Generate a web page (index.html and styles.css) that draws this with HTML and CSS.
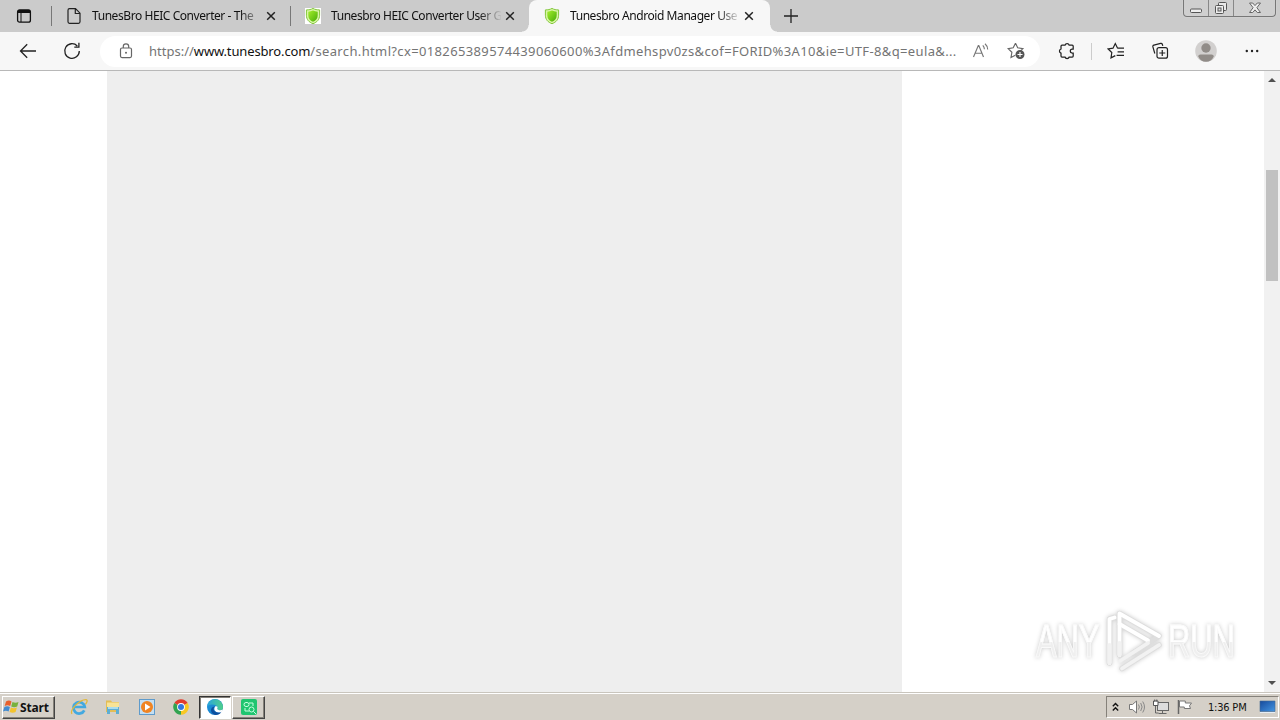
FILE: index.html
```html
<!DOCTYPE html>
<html lang="en">
<head>
<meta charset="utf-8">
<title>Tunesbro Android Manager User Guide</title>
<link rel="stylesheet" href="styles.css">
</head>
<body>
<svg class="defs" width="0" height="0">
  <defs>
    <linearGradient id="green" x1="0" y1="0" x2="1" y2="1"><stop offset="0" stop-color="#a4ee2c"/><stop offset="1" stop-color="#48ac08"/></linearGradient>
    <linearGradient id="edge" x1="0" y1="0" x2="1" y2="1"><stop offset="0" stop-color="#1e9be0"/><stop offset=".5" stop-color="#1a86d0"/><stop offset="1" stop-color="#0c4ea8"/></linearGradient>
    <linearGradient id="edgeTop" x1="0" y1="0" x2="1" y2="0"><stop offset="0" stop-color="#2aa5dc"/><stop offset="1" stop-color="#4fd08a"/></linearGradient>
    <linearGradient id="screen" x1="0" y1="0" x2="1" y2="1"><stop offset="0" stop-color="#164a9c"/><stop offset="1" stop-color="#4596e2"/></linearGradient>
    <symbol id="shield" viewBox="0 0 16 16">
      <path d="M8 .4C6.200 1.500 3.800 1.900 1.400 1.900v5.300C1.400 11.500 4 14.300 8 15.700c4-1.400 6.600-4.200 6.600-8.500V1.900C12.200 1.900 9.800 1.500 8 .4z" fill="#d9f5a6" stroke="#82c83a" stroke-width="1"/>
      <path d="M8 2.600C6.600 3.300 5 3.700 3.300 3.800v3.400c0 3.200 1.800 5.300 4.700 6.500 2.900-1.200 4.700-3.300 4.700-6.500V3.800C11 3.700 9.400 3.300 8 2.600z" fill="url(#green)"/>
    </symbol>
    <symbol id="close" viewBox="0 0 10 10"><path d="M1.200 1.200l7.600 7.600M8.800 1.200L1.200 8.800" stroke="#222" stroke-width="1.500" fill="none"/></symbol>
  </defs>
</svg>
<div class="screen">
  <header class="tabstrip">
    <div class="tab-actions">
      <svg width="16" height="16" viewBox="0 0 16 16"><rect x="1.600" y="1.800" width="12.800" height="12.400" rx="2" fill="none" stroke="#111" stroke-width="1.300"/><path d="M2 2h12v3H2z" fill="#111"/><path d="M5 5v9" stroke="#111"/></svg>
    </div>
    <div class="tab">
      <svg class="favicon" width="16" height="18" viewBox="0 0 16 18"><path d="M3.500 1.700h6L14 6.200v8.600q0 1.500-1.500 1.500h-9Q2 16.300 2 14.800V3.200q0-1.500 1.500-1.500zM9.300 2v4.500h4.500" fill="none" stroke="#222" stroke-width="1.200"/></svg>
      <span class="tab-title fade-the">TunesBro HEIC Converter - The</span>
      <svg class="close" width="10" height="10"><use href="#close"/></svg>
    </div>
    <div class="tab second">
      <svg class="favicon boxed" width="16" height="16"><use href="#shield"/></svg>
      <span class="tab-title">Tunesbro HEIC Converter User G</span>
      <svg class="close" width="10" height="10"><use href="#close"/></svg>
    </div>
    <div class="tab active">
      <svg class="favicon" width="16" height="16"><use href="#shield"/></svg>
      <span class="tab-title">Tunesbro Android Manager Use</span>
      <svg class="close" width="10" height="10"><use href="#close"/></svg>
    </div>
    <svg class="new-tab" width="14" height="14"><path d="M7 0v14M0 7h14" stroke="#222" stroke-width="1.300"/></svg>
    <div class="window-buttons">
      <span><svg width="12" height="6" viewBox="0 0 12 6"><rect x=".5" y="1" width="11" height="3.500" rx="1" fill="#eee" stroke="#555"/></svg></span>
      <span><svg width="14" height="14" viewBox="0 0 14 14"><rect x="4.500" y="1.500" width="8" height="8" rx="1" fill="#e8e8e8" stroke="#555"/><rect x="1.500" y="4.500" width="8" height="8" rx="1" fill="#eee" stroke="#555"/><rect x="4" y="7" width="3" height="3" fill="#ddd" stroke="#555"/></svg></span>
      <span class="wide"><svg width="14" height="12" viewBox="0 0 14 12"><path d="M1.500 1h3.200L7 3.600 9.300 1h3.200L8.900 5.700l3.600 4.800H9.300L7 7.900l-2.300 2.600H1.500l3.600-4.800z" fill="#eee" stroke="#666"/></svg></span>
    </div>
  </header>

  <nav class="toolbar">
    <svg class="back" width="18" height="16" viewBox="0 0 18 16"><path d="M17 8H1.500M8.200 1.300L1.500 8l6.700 6.700" fill="none" stroke="#222" stroke-width="1.300"/></svg>
    <svg class="reload" width="18" height="18" viewBox="0 0 18 18"><path d="M16.300 9A7.300 7.300 0 1 1 14.300 4M11.300 5.200h4.600V.8" fill="none" stroke="#222" stroke-width="1.300"/></svg>
    <div class="address">
      <svg class="lock" width="14" height="16" viewBox="0 0 14 16"><rect x="1.500" y="5" width="11" height="9.600" rx="1.500" fill="none" stroke="#666" stroke-width="1.200"/><path d="M4.300 5V3.500a2.700 2.700 0 0 1 5.400 0V5" fill="none" stroke="#666" stroke-width="1.200"/><circle cx="7" cy="9.800" r="1" fill="#666"/></svg>
      <span class="url"><span class="scheme">https://</span><span class="host">www.tunesbro.com</span><span class="path">/search.html?cx=018265389574439060600%3Afdmehspv0zs&amp;cof=FORID%3A10&amp;ie=UTF-8&amp;q=eula&amp;...</span></span>
      <svg class="read" width="18" height="16" viewBox="0 0 18 16"><path d="M1.500 14L6.300 2.500h.5L11.500 14M3.200 10.200h6.700M10.800 2.300q1.600 1.700 1.600 4M13 .8q2.700 2.400 2.700 5.600" fill="none" stroke="#777" stroke-width="1.150"/></svg>
      <svg class="fav-add" width="19" height="18" viewBox="0 0 19 18"><path d="M8.500 1.300l2.200 4.500 5.200.8-3.400 3.300M8.500 1.300L6.200 5.800 1.200 6.600l3.700 3.700L4 15.500l4.300-2.300" fill="none" stroke="#666" stroke-width="1.150"/><circle cx="13" cy="12.500" r="4.500" fill="#555"/><path d="M13 10v5M10.500 12.500h5" stroke="#fff" stroke-width="1.100"/></svg>
    </div>
    <svg class="puzzle" width="18" height="18" viewBox="0 0 18 18"><path d="M4 3.200h3a2.200 2.200 0 0 1 4.200 0h3q1 0 1 1v3h-1a1.900 1.900 0 0 0 0 3.800h1v3q0 1-1 1h-3a2.200 2.200 0 0 1-4.200 0H4q-1 0-1-1v-2.800a2.200 2.200 0 0 1 0-4.200V4.200q0-1 1-1z" fill="none" stroke="#222" stroke-width="1.250"/></svg>
    <i class="divider"></i>
    <svg class="favs" width="18" height="18" viewBox="0 0 18 18"><path d="M10.600 6.200L8.300 1.500 6 6.200 1.200 7l3.600 3.500-.8 5.400 4.300-2.300M10.600 6.200H17M10.600 9.800H17M9.600 13.300H17" fill="none" stroke="#222" stroke-width="1.200"/></svg>
    <svg class="collections" width="18" height="18" viewBox="0 0 18 18"><path d="M3.800 11.500L1.900 4.900q-.4-1.400 1-1.800l6.700-1.700q1.300-.3 1.700.9l.5 1.600" fill="none" stroke="#222" stroke-width="1.200"/><rect x="6" y="5.700" width="10.500" height="10.500" rx="2" fill="#f7f7f7" stroke="#222" stroke-width="1.200"/><path d="M11.250 8v6M8.250 11h6" stroke="#222" stroke-width="1.200"/></svg>
    <svg class="avatar" width="22" height="22" viewBox="0 0 22 22"><circle cx="11" cy="11" r="10.800" fill="#d2d0cf"/><circle cx="11" cy="8" r="4.700" fill="#918c88"/><path d="M3.200 16.500q0-2 2.300-2h11q2.300 0 2.300 2-2.500 5.300-7.800 5.300t-7.800-5.300z" fill="#918c88"/></svg>
    <svg class="more" width="14" height="4" viewBox="0 0 14 4"><g fill="#222"><circle cx="1.800" cy="2" r="1.200"/><circle cx="7" cy="2" r="1.200"/><circle cx="12.200" cy="2" r="1.200"/></g></svg>
  </nav>

  <main class="viewport">
    <div class="ad-block"></div>
    <div class="scrollbar">
      <svg width="8" height="4"><path d="M0 4L4 0l4 4z" fill="#505050"/></svg>
      <i class="thumb"></i>
      <svg class="down" width="8" height="4"><path d="M0 0l4 4 4-4z" fill="#505050"/></svg>
    </div>
    <div class="watermark">
      <span class="any">ANY</span>
      <svg width="58" height="64" viewBox="0 0 58 64"><g fill="none" stroke-linejoin="round" stroke-linecap="round"><g stroke="#dedede" stroke-width="5.500"><path d="M4.500 54V10l5-1.500"/><path d="M14.500 46V4.500L54 27 28 44"/><path d="M14.500 15L43 31.500"/><path d="M17 59.500L54 36"/></g><g stroke="#fff" stroke-width="3.800"><path d="M4.500 54V10l5-1.500"/><path d="M14.500 46V4.500L54 27"/><path d="M14.500 15L43 31.500"/></g><g stroke="#f2f2f2" stroke-width="3.800"><path d="M4.500 54V36M14.500 46V34M43 34L15 52M17 59.500L54 36"/></g></g></svg>
      <span class="run">RUN</span>
    </div>
  </main>

  <footer class="taskbar">
    <div class="start">
      <svg width="17" height="16" viewBox="0 0 17 16"><path d="M3 2.500q3-1.800 5.500 0L7.200 7Q4.500 5.500 1.700 7z" fill="#e8602c"/><path d="M9.500 3q3 1.400 6 0l-1.300 4.500q-3 1.300-6 0z" fill="#78b13c"/><path d="M1.400 8q2.800-1.500 5.500 0l-1.300 4.600Q3 11 0 12.500z" fill="#438bd0"/><path d="M7.900 8.500q3 1.400 6 0L12.600 13q-3 1.400-6 0z" fill="#f3c32e"/></svg>
      <b>Start</b>
    </div>
    <div class="quick">
      <div class="app"><svg width="18" height="18" viewBox="0 0 18 18"><path d="M14.300 12.300A5.700 5.700 0 1 1 14.800 9H4.500" fill="none" stroke="#43a9e0" stroke-width="2.700"/><path d="M2 15.800C-.5 12.500 9 1.500 16 1.600c2 .3 1 3-.5 4.600" fill="none" stroke="#e2b83a" stroke-width="1.300"/></svg></div>
      <div class="app"><svg width="18" height="18" viewBox="0 0 18 18"><path d="M2 2.500h5l1 1.500h7V14H2z" fill="#e3bd55"/><path d="M3 4.500h12v5H3z" fill="#f8e396"/><path d="M3 16V9h12v7h-3v-4H6v4z" fill="#5eaed3"/><path d="M4 9h10v2H4z" fill="#a9dcee"/></svg></div>
      <div class="app"><svg width="18" height="18" viewBox="0 0 18 18"><rect x="1.500" y="1.500" width="15" height="15" fill="#c4dff2" stroke="#5f9bcb"/><circle cx="9" cy="9" r="6" fill="#f08422"/><path d="M7 5.500l5.500 3.500L7 12.500z" fill="#fff"/></svg></div>
      <div class="app"><svg width="18" height="18" viewBox="0 0 18 18"><path d="M9 9L2.300 5.100A7.750 7.750 0 0 1 15.700 5.100z" fill="#e23c2e"/><path d="M9 9l6.700-3.900A7.750 7.750 0 0 1 9 16.750z" fill="#f8c822"/><path d="M9 9v7.750A7.750 7.750 0 0 1 2.300 5.100z" fill="#31a350"/><circle cx="9" cy="9" r="3.900" fill="#fff"/><circle cx="9" cy="9" r="3" fill="#3478e0"/></svg></div>
      <div class="app pressed"><svg width="18" height="18" viewBox="0 0 18 18"><circle cx="9" cy="9" r="8" fill="url(#edge)"/><path d="M1.100 8A8 8 0 0 1 17 9q0 3.500-3.500 3.500-3 0-2.300-1.700Q12 8 8.500 6.800 4.500 5.600 1.100 8z" fill="url(#edgeTop)"/><path d="M9.300 8.300q2-.4 2.300 1-1.200 2.500 1.700 2.900 2 .2 3.700-.8l-1.700 3.100q-5.500.5-6.900-2.500-.5-2 .9-3.700z" fill="#fff"/><path d="M8.500 8.500q-1.500 2-.5 4.200 1.800 3 7.300 1.700-2 2.400-5.600 2.500-4.300-.8-4.700-4.600 0-3 3.500-3.800z" fill="#0d4f9e"/></svg></div>
      <div class="app raised"><svg width="18" height="18" viewBox="0 0 18 18"><rect x="1" y="1" width="16" height="16" rx="2" fill="#20c570"/><g fill="none" stroke="#c8ffe0" stroke-width="1"><rect x="4" y="4.500" width="5" height="4" rx="2"/><path d="M9 5h4v3M5 10v3h4"/><circle cx="11.500" cy="11.500" r="2.500"/><path d="M13.500 13.500L16 16"/></g></svg></div>
    </div>
    <div class="tray">
      <svg class="chev" width="7" height="10" viewBox="0 0 7 10"><path d="M.8 4.200l2.700-2.700 2.700 2.700M.8 8.500l2.700-2.700 2.700 2.700" fill="none" stroke="#111" stroke-width="1.400"/></svg>
      <svg class="sound" width="18" height="16" viewBox="0 0 18 16"><path d="M1.500 5.500h3L8.500 2v12l-4-3.500h-3z" fill="#fff" stroke="#777"/><path d="M10.500 5.500q1.700 2.500 0 5M12.700 4q2.800 4 0 8M14.700 2.500q3.600 5.500 0 11" fill="none" stroke="#888"/></svg>
      <svg class="net" width="18" height="16" viewBox="0 0 18 16"><rect x="5.500" y="3.500" width="11" height="8" fill="#ddd" stroke="#666"/><path d="M6.500 14.500h8M10.500 12v2M3.500 7v7h3" stroke="#666" fill="none"/><path d="M1.500 2v4.500h4.500V2zM2.700.5v2M4.800.5v2" stroke="#555" fill="#fff"/></svg>
      <svg class="flag" width="18" height="16" viewBox="0 0 18 16"><path d="M2.500 1v14" stroke="#666" stroke-width="1.500"/><path d="M3.500 2h5.800v2h6.200l-2 2.800 1 2.700H8.300V8H3.500z" fill="#fff" stroke="#777"/></svg>
      <time>1:36 PM</time>
      <svg class="desktop" width="17" height="14" viewBox="0 0 17 14"><path d="M1 1h15v10.500H1z" fill="url(#screen)" stroke="#456891" stroke-width=".6"/><path d="M1 12.500h15" stroke="#e6edf4"/></svg>
    </div>
  </footer>
</div>
</body>
</html>
```

FILE: styles.css
```css
* { box-sizing: border-box; }
body { margin: 0; background: #fff; font-family: "Noto Sans", "Open Sans", sans-serif; color: #111; }
svg { display: block; flex: none; }
.defs { position: absolute; }
.screen { width: 1280px; height: 720px; display: flex; flex-direction: column; overflow: hidden; }

.tabstrip { height: 32px; flex: none; display: flex; background: #cbcbcb; }
.tab-actions { width: 51px; padding: 8px 0 0 16px; }
.tab { width: 239px; height: 32px; display: flex; align-items: center; padding-left: 15px; background: linear-gradient(#777, #777) 0 6px / 1px 20px no-repeat; }
.tab.active { position: relative; width: 241px; padding-left: 15px; background: #f7f7f7; border-radius: 8px 8px 0 0; }
.tab.active::before, .tab.active::after { content: ""; position: absolute; bottom: 0; width: 7px; height: 7px; }
.tab.active::before { left: -7px; background: radial-gradient(circle at 0 0, transparent 6px, #f7f7f7 7px); }
.tab.active::after { right: -7px; background: radial-gradient(circle at 100% 0, transparent 6px, #f7f7f7 7px); }
.boxed { background: #fff; }
.tab-title { width: 170px; margin-left: 10px; font-size: 12px; line-height: 18px; letter-spacing: -.43px; white-space: nowrap; -webkit-mask-image: linear-gradient(90deg, #000 148px, transparent 171px); mask-image: linear-gradient(90deg, #000 148px, transparent 171px); }
.tab .close { margin-left: 4px; }
.new-tab { margin: 9px 0 0 14px; }
.window-buttons { display: flex; height: 17px; margin: 0 4px 0 auto; border: 1px solid #777; border-top: 0; border-radius: 0 0 4px 4px; background: #cfcfcf; box-shadow: 0 0 1px #eee; }
.window-buttons span { width: 25px; display: flex; justify-content: center; align-items: center; border-right: 1px solid #888; }
.window-buttons span:first-child { padding-top: 5px; }
.window-buttons .wide { width: 41px; border: 0; }

.toolbar { height: 39px; flex: none; display: flex; align-items: center; background: #f7f7f7; border-bottom: 1px solid #b8b8b8; }
.back { margin-left: 19px; }
.reload { margin-left: 26px; }
.address { width: 940px; height: 31px; margin-left: 19px; padding-left: 19px; display: flex; align-items: center; background: #fff; border-radius: 16px; }
.url { width: 809px; margin-left: 16px; display: flex; font-size: 13px; line-height: 20px; white-space: nowrap; color: #747474; }
.host { color: #111; letter-spacing: -.14px; }
.path { letter-spacing: .36px; }
.read { margin-left: 14px; }
.fav-add { margin-left: 17px; }
.puzzle { margin-left: 18px; }
.divider { width: 1px; height: 17px; margin-left: 15px; background: #ccc; }
.favs { margin-left: 15px; }
.collections { margin-left: 26px; }
.avatar { margin-left: 26px; }
.more { margin-left: 28px; }

.viewport { position: relative; height: 621px; display: flex; justify-content: space-between; }
.ad-block { width: 795px; margin-left: 107px; background: #eee; }
.scrollbar { width: 16px; background: #f1f1f1; display: flex; flex-direction: column; align-items: center; padding: 7px 0; }
.thumb { width: 12px; height: 111px; margin-top: 88px; background: #c1c1c1; }
.down { margin-top: auto; }
.watermark { position: absolute; right: 46px; bottom: 19px; display: flex; align-items: center; filter: drop-shadow(0 0 2px #ccc); }
.watermark span { font: 46px/60px "Liberation Sans", sans-serif; display: block; color: transparent; background: linear-gradient(#fff 52%, #efefef 52%); -webkit-background-clip: text; background-clip: text; -webkit-text-stroke: 1px #fafafa; width: 98px; margin-right: -34px; white-space: nowrap; transform-origin: left; transform: scaleX(.67); }
.watermark svg { margin-left: 5px; margin-right: 5px; }
.watermark .run { width: 100px; }

.taskbar { height: 28px; flex: none; display: flex; align-items: center; background: #d5d0c8; border-top: 1px solid #c9c5bd; box-shadow: inset 0 1px #fff; font-family: "DejaVu Sans Condensed", "DejaVu Sans", sans-serif; }
.start { width: 53px; height: 23px; margin: 1px 0 0 2px; display: flex; align-items: center; border: 1px solid; border-color: #fff #444 #444 #fff; box-shadow: inset -1px -1px #858179; }
.start b { font-family: "Open Sans", "Noto Sans", sans-serif; font-size: 12px; letter-spacing: -.2px; }
.quick { display: flex; margin: 1px 0 0 7px; }
.app { width: 34px; height: 23px; display: flex; justify-content: center; align-items: center; }
.pressed { width: 32px; margin-left: 1px; margin-right: 1px; background: #fff; border: 1px solid; border-color: #333 #fff #fff #333; box-shadow: inset 1px 1px #85817a; }
.raised { width: 33px; border: 1px solid; border-color: #fff #444 #444 #fff; box-shadow: inset -1px -1px #858179; background: #d5d0c8; }
.tray { width: 173px; height: 22px; margin: 1px 1px 0 auto; display: flex; align-items: center; border: 1px solid; border-color: #85817a #fff #fff #85817a; }
.chev { margin-left: 5px; }
.sound { margin-left: 9px; }
.net { margin-left: 6px; }
.flag { margin-left: 6px; }
.tray time { width: 42px; margin-left: 14px; font-size: 11px; letter-spacing: -.2px; white-space: nowrap; color: #111; }
.desktop { margin-left: 9px; }
```
